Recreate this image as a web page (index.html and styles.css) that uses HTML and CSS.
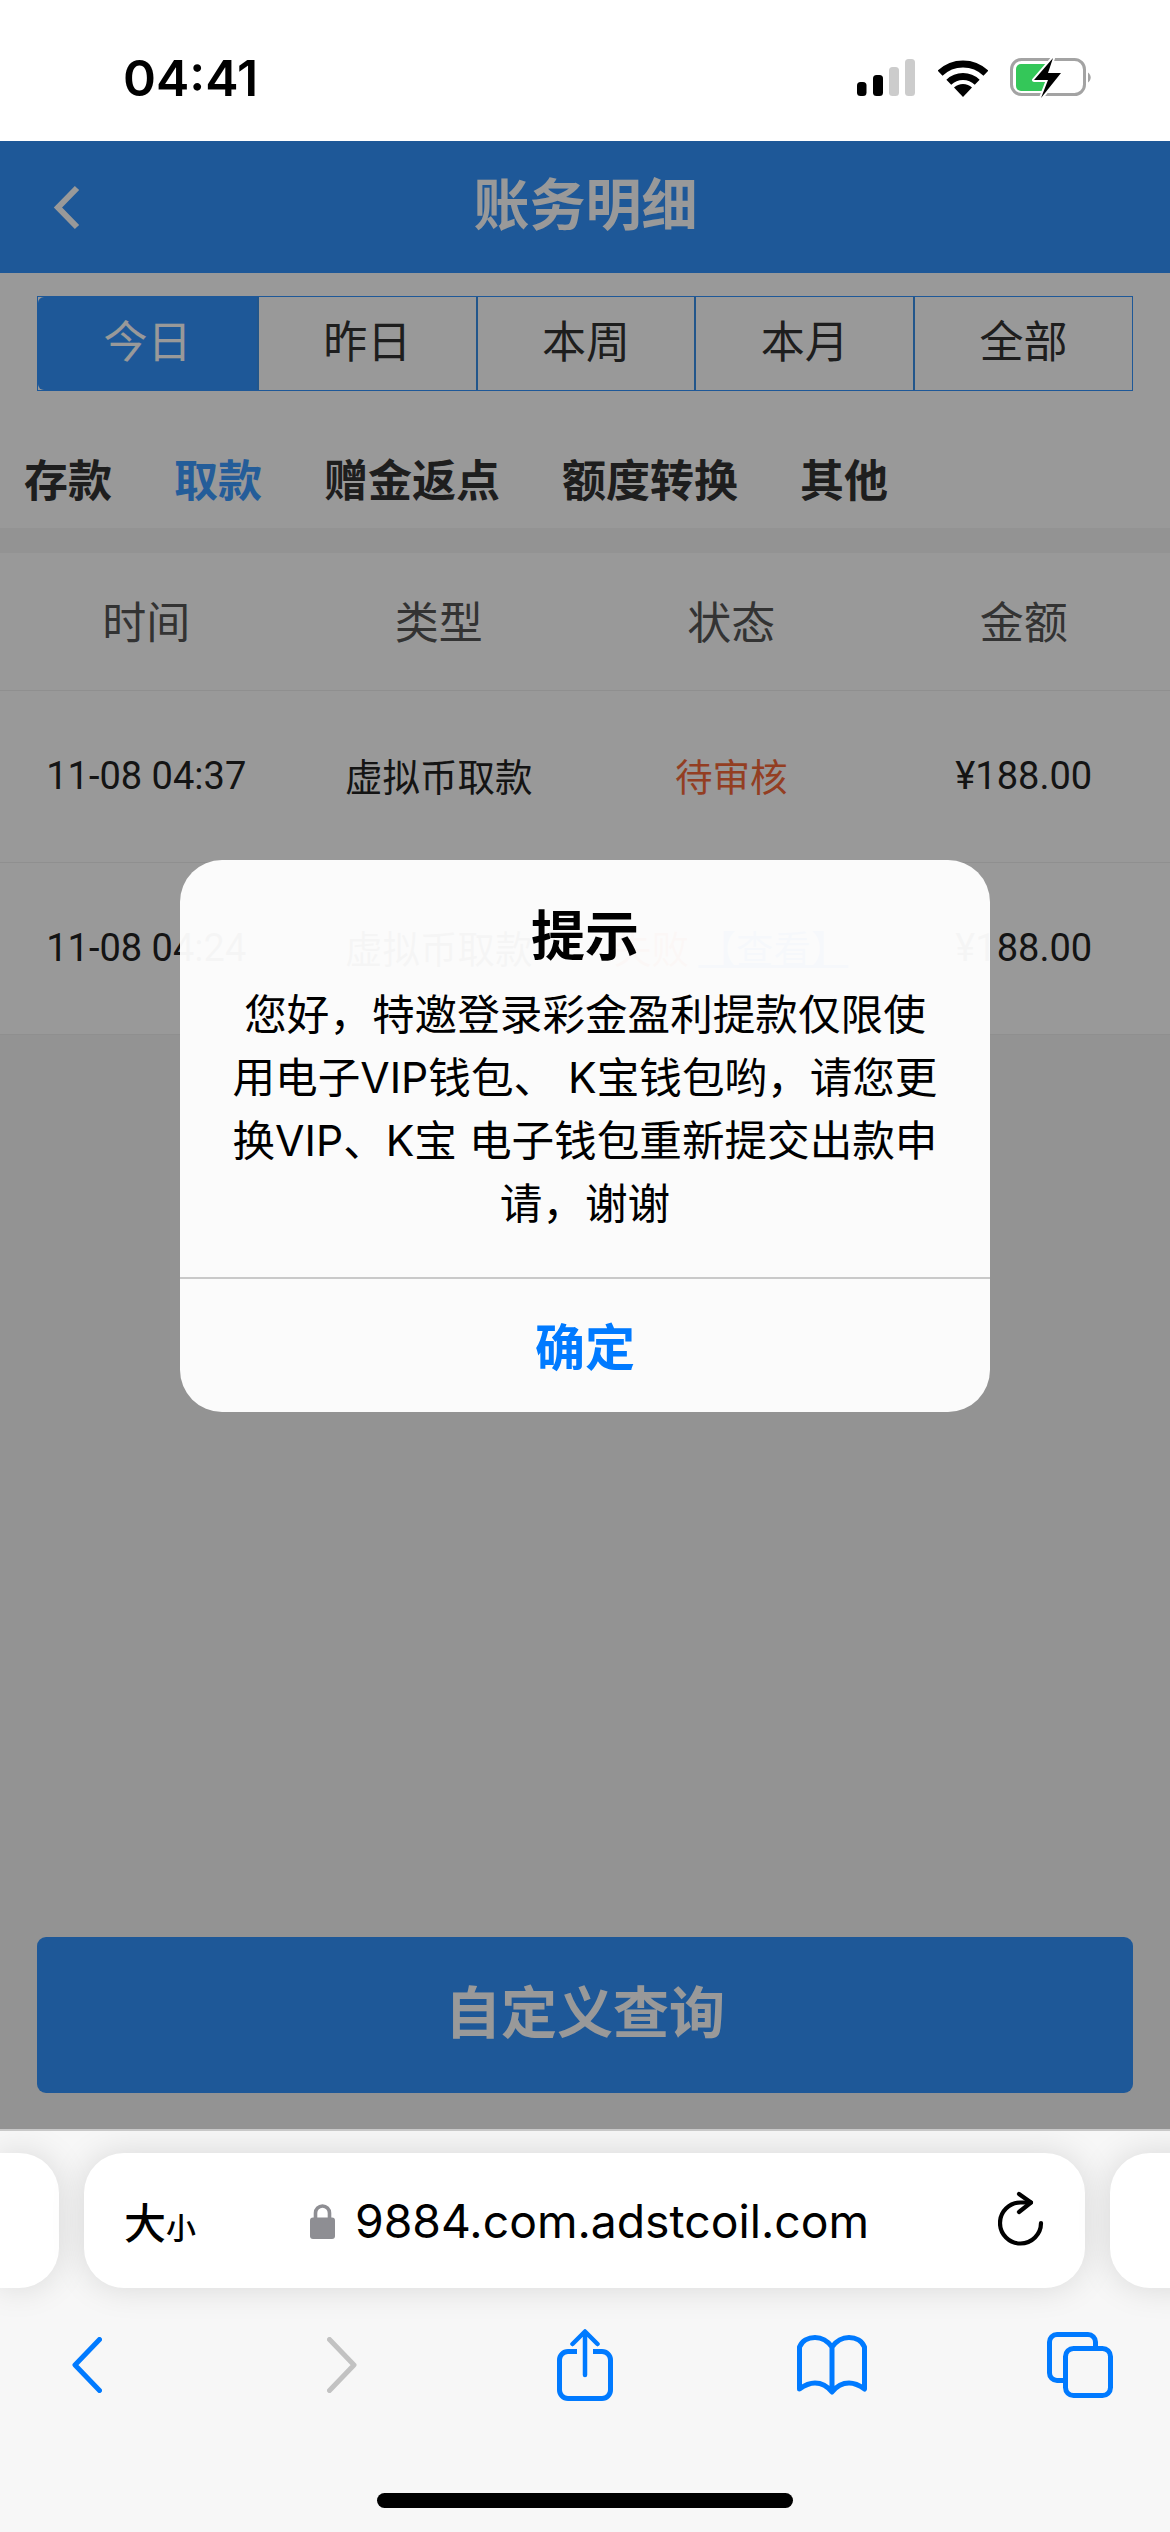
FILE: index.html
```html
<!DOCTYPE html>
<html lang="zh-CN">
<head>
<meta charset="utf-8">
<title>账务明细</title>
<link rel="stylesheet" href="styles.css">
</head>
<body>
<div class="phone">
  <div class="status">
    <span class="time">04:41</span>
    <div class="status-icons">
      <svg class="signal" width="58" height="37" viewBox="0 0 58 37">
        <rect x="0" y="23" width="9.5" height="14" rx="3.5" fill="#000"/>
        <rect x="16" y="16" width="10" height="21" rx="3.5" fill="#000"/>
        <rect x="32" y="8" width="10" height="29" rx="3.5" fill="#ccc"/>
        <rect x="48" y="0" width="10" height="37" rx="3.5" fill="#ccc"/>
      </svg>
      <svg class="wifi" width="50" height="38" viewBox="0 0 50 38">
        <path d="M2.1 14.2A33 33 0 0 1 47.9 14.2" fill="none" stroke="#000" stroke-width="7"/>
        <path d="M10.8 23.2A20.5 20.5 0 0 1 39.2 23.2" fill="none" stroke="#000" stroke-width="7"/>
        <path d="M25 38L16 28.6A13 13 0 0 1 34 28.6Z" fill="#000"/>
      </svg>
      <svg class="battery" width="84" height="44" viewBox="0 0 84 44">
        <rect x="1.5" y="3.5" width="73" height="35" rx="10" fill="#fff" stroke="#a3a3a3" stroke-width="3"/>
        <path d="M78 16.5a6 6 0 0 1 0 10z" fill="#a3a3a3"/>
        <rect x="6" y="8" width="33" height="27" rx="5" fill="#34c759"/>
        <path d="M43 2L24 24H38L31 42L51 17H38Z" fill="#000" stroke="#fff" stroke-width="4" paint-order="stroke" stroke-linejoin="round"/>
      </svg>
    </div>
  </div>

  <div class="main">
    <header class="header">
      <svg class="back" width="28" height="47" viewBox="0 0 28 47">
        <path d="M24 4L5 23.5L24 43" fill="none" stroke="#fff" stroke-width="6"/>
      </svg>
      <h1 class="title">账务明细</h1>
    </header>

    <section class="filters">
      <div class="tabs">
        <div class="tab tab-on">今日</div>
        <div class="tab">昨日</div>
        <div class="tab">本周</div>
        <div class="tab">本月</div>
        <div class="tab">全部</div>
      </div>
      <nav class="cats">
        <span class="cat">存款</span>
        <span class="cat cat-on">取款</span>
        <span class="cat">赠金返点</span>
        <span class="cat">额度转换</span>
        <span class="cat">其他</span>
      </nav>
    </section>

    <section class="table">
      <div class="row row-head">
        <span>时间</span><span>类型</span><span>状态</span><span>金额</span>
      </div>
      <div class="row">
        <span class="num">11-08 04:37</span><span>虚拟币取款</span><span class="red">待审核</span><span class="num">¥188.00</span>
      </div>
      <div class="row">
        <span class="num">11-08 04:24</span><span>虚拟币取款</span><span class="nowrap"><span class="red">失败</span> <span class="link">【查看】</span></span><span class="num">¥188.00</span>
      </div>
    </section>

    <button class="query">自定义查询</button>

    <div class="overlay">
      <div class="dialog">
        <div class="dialog-title">提示</div>
        <p class="dialog-body">您好，特邀登录彩金盈利提款仅限使用电子VIP钱包、 K宝钱包哟，请您更换VIP、K宝 电子钱包重新提交出款申请，谢谢</p>
        <div class="dialog-btn">确定</div>
      </div>
    </div>
  </div>

  <div class="toolbar">
    <div class="pills">
      <div class="pill pill-left"></div>
      <div class="pill pill-main">
        <span class="aa"><span class="aa-big">大</span><span class="aa-small">小</span></span>
        <svg class="lock" width="25" height="36" viewBox="0 0 25 36">
          <path d="M5.5 16V10a7 7 0 0 1 14 0v6" fill="none" stroke="#8e8e93" stroke-width="3.6"/>
          <rect x="0" y="14.5" width="25" height="21.5" rx="3" fill="#8e8e93"/>
        </svg>
        <span class="url">9884.com.adstcoil.com</span>
        <svg class="reload" width="46" height="56" viewBox="0 0 46 56">
          <path d="M43 32A20.500 20.500 0 1 1 22.500 11.500H33" fill="none" stroke="#000" stroke-width="4.200" stroke-linecap="round"/>
          <path d="M21 3L33 11.500L21 21" fill="none" stroke="#000" stroke-width="4.200" stroke-linecap="round" stroke-linejoin="round"/>
        </svg>
      </div>
      <div class="pill pill-right"></div>
    </div>
    <div class="nav">
      <svg width="30" height="56" viewBox="0 0 30 56">
        <path d="M27.500 2.500L3 28L27.500 53.500" fill="none" stroke="#007aff" stroke-width="5" stroke-linecap="round" stroke-linejoin="round"/>
      </svg>
      <svg width="30" height="56" viewBox="0 0 30 56">
        <path d="M2.500 2.500L27 28L2.500 53.500" fill="none" stroke="#c2c2c2" stroke-width="5" stroke-linecap="round" stroke-linejoin="round"/>
      </svg>
      <svg width="56" height="72" viewBox="0 0 56 72">
        <path d="M20 22.500H11A8.500 8.500 0 0 0 2.500 31V61A8.500 8.500 0 0 0 11 69.500H45A8.500 8.500 0 0 0 53.500 61V31A8.500 8.500 0 0 0 45 22.500H36" fill="none" stroke="#007aff" stroke-width="5"/>
        <path d="M28 46V3M15.500 15L28 2.500L40.500 15" fill="none" stroke="#007aff" stroke-width="4.500" stroke-linecap="round" stroke-linejoin="round"/>
      </svg>
      <svg width="70" height="60" viewBox="0 0 70 60">
        <path d="M35 12C30 5 24 2.500 18 2.500C11 2.500 5 6 2.500 12V54C8 50 13 48 18 48C25 48 31 52 35 57C39 52 45 48 52 48C57 48 62 50 67.500 54V12C65 6 59 2.500 52 2.500C46 2.500 40 5 35 12V57" fill="none" stroke="#007aff" stroke-width="5" stroke-linejoin="round"/>
      </svg>
      <svg width="66" height="66" viewBox="0 0 66 66">
        <path d="M48.500 15V10A7.500 7.500 0 0 0 41 2.500H10A7.500 7.500 0 0 0 2.500 10V41A7.500 7.500 0 0 0 10 48.500H17" fill="none" stroke="#007aff" stroke-width="5"/>
        <rect x="18.500" y="16.500" width="45" height="47" rx="8" fill="none" stroke="#007aff" stroke-width="5"/>
      </svg>
    </div>
    <div class="home"></div>
  </div>
</div>
</body>
</html>
```

FILE: styles.css
```css
* { box-sizing: border-box; }
html, body { margin: 0; padding: 0; }
body {
  background: #fff;
  font-family: Roboto, "Noto Sans CJK SC", sans-serif;
  color: #222;
}
.phone {
  width: 1170px;
  height: 2532px;
  display: flex;
  flex-direction: column;
  overflow: hidden;
}

/* status bar */
.status {
  height: 141px;
  flex: none;
  background: #fff;
  display: flex;
  justify-content: space-between;
  align-items: flex-start;
  padding: 0 76px 0 123px;
}
.time {
  font-family: Inter, sans-serif;
  font-weight: 600;
  font-size: 50px;
  line-height: 50px;
  margin-top: 53px;
  color: #000;
}
.status-icons {
  display: flex;
  align-items: flex-start;
  margin-top: 56px;
}
.signal { margin-top: 3px; }
.wifi { margin: 3px 22px 0 23px; }

/* page */
.main {
  position: relative;
  flex: 1;
  display: flex;
  flex-direction: column;
  background: #f5f5f5;
}
.header {
  height: 132px;
  flex: none;
  background: #3293fd;
  display: grid;
  grid-template-columns: 1fr auto 1fr;
  align-items: center;
  padding-left: 53px;
}
.title {
  margin: 0 0 2px;
  font-size: 56px;
  line-height: 66px;
  font-weight: 700;
  color: #fff;
  grid-column: 2;
  transform: translateX(-26px);
}
.back { grid-column: 1; grid-row: 1; }

.filters {
  background: #fff;
  height: 255px;
  flex: none;
  padding-top: 23px;
}
.tabs {
  margin: 0 37px;
  height: 95px;
  display: grid;
  grid-template-columns: repeat(5, 1fr);
  border: 1px solid #3293fd;
}
.tab {
  display: flex;
  align-items: center;
  justify-content: center;
  padding-bottom: 9px;
  font-size: 44px;
  color: #333;
  border-left: 2px solid #3a8fe8;
}
.tab:first-child { border-left: 0; }
.tab-on {
  background: #3293fd;
  color: #fff;
  border-radius: 6px 0 0 6px;
}

.cats {
  display: flex;
  gap: 62px;
  padding: 69px 0 0 24px;
}
.cat {
  font-size: 44px;
  line-height: 44px;
  font-weight: 700;
  color: #333;
}
.cat-on { color: #3d9bff; }

.table {
  margin-top: 25px;
  background: #fff;
  flex: none;
}
.row {
  height: 172px;
  display: grid;
  grid-template-columns: repeat(4, 1fr);
  align-items: center;
  justify-items: center;
  padding-bottom: 4px;
  border-bottom: 1px solid #eee;
  font-size: 37.500px;
  color: #222;
}
.row-head {
  height: 138px;
  font-size: 44px;
  color: #555;
}
.num { font-size: 38px; margin-top: 3px; }
.red { color: #f5683a; }
.link { color: #3293fd; text-decoration: underline; }
.nowrap { white-space: nowrap; }

.query {
  margin: auto 37px 36px;
  height: 156px;
  flex: none;
  border: 0;
  border-radius: 9px;
  padding-bottom: 14px;
  background: #3293fd;
  color: #fff;
  font-family: inherit;
  font-size: 56px;
  font-weight: 700;
}

/* modal layer */
.overlay {
  position: absolute;
  inset: 0;
  background: rgba(0, 0, 0, 0.4);
  display: flex;
  justify-content: center;
  align-items: flex-start;
  padding-top: 719px;
}
.dialog {
  width: 810px;
  height: 552px;
  border-radius: 42px;
  background: rgba(255, 255, 255, 0.96);
  display: flex;
  flex-direction: column;
  color: #000;
  text-align: center;
}
.dialog-title {
  padding-top: 42px;
  font-size: 54px;
  line-height: 72px;
  font-weight: 700;
}
.dialog-body {
  margin: 9px 0 0;
  padding: 0 44px;
  height: 296px;
  font-size: 42.600px;
  line-height: 63px;
  font-family: Inter, "Noto Sans CJK SC", sans-serif;
  border-bottom: 2px solid #c9c9c9;
}
.dialog-btn {
  flex: 1;
  display: flex;
  align-items: center;
  justify-content: center;
  padding-bottom: 3px;
  font-size: 50px;
  font-weight: 700;
  color: #007aff;
}

/* browser toolbar */
.toolbar {
  height: 403px;
  flex: none;
  background: #f7f7f7;
  border-top: 2px solid #c8c8c8;
  position: relative;
  overflow: hidden;
}
.pills {
  display: grid;
  grid-template-columns: 60px 1001px 1fr;
  column-gap: 25px;
  margin: 22px -40px 0 -1px;
}
.pill {
  height: 135px;
  background: #fff;
  box-shadow: 0 0 34px rgba(0, 0, 0, 0.13);
}
.pill-left { border-radius: 0 40px 40px 0; }
.pill-right { border-radius: 40px 0 0 40px; }
.pill-main {
  border-radius: 40px;
  display: flex;
  align-items: center;
  padding: 0 41px 0 40px;
  color: #000;
}
.aa {
  width: 186px;
  display: flex;
  align-items: baseline;
  font-family: "Noto Sans CJK SC", sans-serif;
  font-weight: 500;
}
.aa-big { font-size: 42px; }
.aa-small { font-size: 30px; }
.lock { flex: none; }
.url {
  margin-left: 20px;
  font-family: Inter, sans-serif;
  font-size: 46.300px;
  white-space: nowrap;
}
.reload { margin-left: auto; flex: none; margin-top: -4px; }

.nav {
  height: 76px;
  margin-top: 39px;
  padding-left: 72px;
  display: grid;
  grid-template-columns: 255px 230px 240px 250px 66px;
  align-items: center;
  justify-items: start;
}
.home {
  position: absolute;
  left: 377px;
  top: 362px;
  width: 416px;
  height: 15px;
  border-radius: 8px;
  background: #000;
}
```
